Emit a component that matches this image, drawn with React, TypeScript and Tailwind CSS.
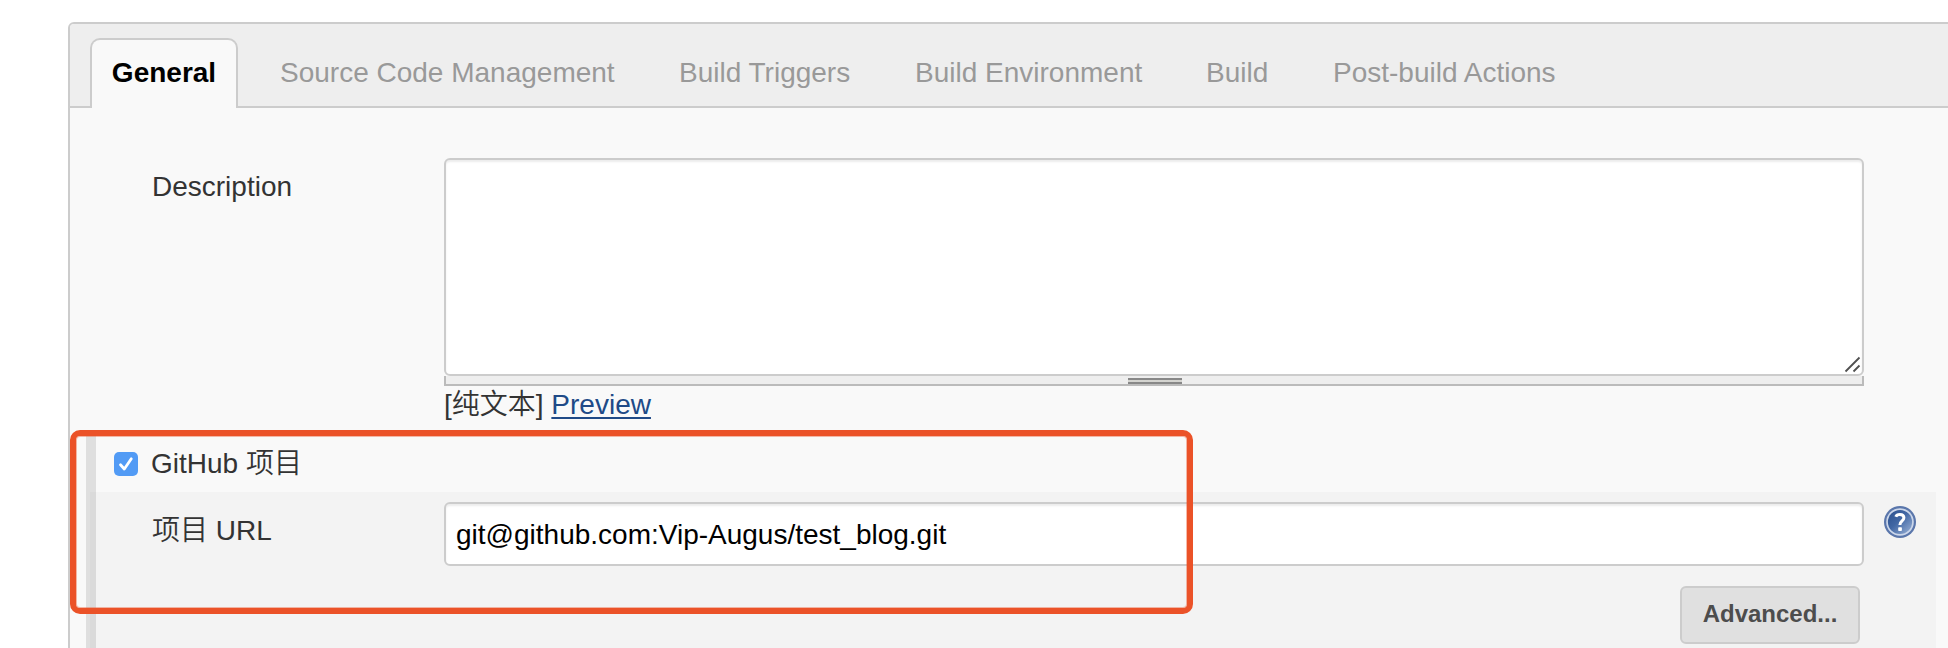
const tabs = [
  { name: "Source Code Management", cls: "w-[335px]" },
  { name: "Build Triggers", cls: "w-[172px]" },
  { name: "Build Environment", cls: "w-[227px]" },
  { name: "Build", cls: "w-[63px]" },
  { name: "Post-build Actions", cls: "w-[225px]" },
];

function HelpIcon() {
  return (
    <svg width="32" height="32" viewBox="0 0 32 32" className="block">
      <defs>
        <linearGradient id="ball" x1="0" y1="0" x2="1" y2="1">
          <stop offset="0" stopColor="#2c4f8c" />
          <stop offset="0.45" stopColor="#4167a4" />
          <stop offset="1" stopColor="#9db4d8" />
        </linearGradient>
      </defs>
      <circle cx="16" cy="16" r="16" fill="#5a76ab" />
      <circle cx="16" cy="16" r="13.8" fill="#ccd7ea" />
      <circle cx="16" cy="16" r="12.1" fill="url(#ball)" />
      <path d="M11.8 10.800c.6-1.500 2-2.300 4-2.300 2.500 0 4.100 1.300 4.100 3.300 0 3.200-4 3.200-4 7.200" fill="none" stroke="#fff" strokeWidth="3" />
      <rect x="14.200" y="21.300" width="3.700" height="3.700" rx="0.800" fill="#fff" />
    </svg>
  );
}

export default function App() {
  return (
    <div className="relative h-[648px] w-[1948px] overflow-hidden bg-white pt-[22px] pl-[68px] font-['Liberation_Sans','Noto_Sans_CJK_SC',sans-serif] text-[28px] leading-[32px] text-[#333]">
      <div className="h-[640px] w-[1900px] rounded-tl-[6px] border-2 border-[#ccc] bg-[#f9f9f9]">
        <div className="flex h-[84px] items-end rounded-tl-[4px] border-b-2 border-[#ccc] bg-[#eee] pl-5">
          <div className="-mb-[2px] flex h-[70px] w-[148px] justify-center rounded-t-[10px] border-2 border-b-0 border-[#ccc] bg-[#f9f9f9] pt-[17px] font-bold text-black">
            General
          </div>
          <div className="ml-[42px] flex h-[66px] gap-16 pt-[17px] text-[#999]">
            {tabs.map((t) => (
              <div key={t.name} className={`shrink-0 whitespace-nowrap ${t.cls}`}>{t.name}</div>
            ))}
          </div>
        </div>

        <div className="flex h-[322px] pt-[50px] pl-[82px]">
          <div className="w-[292px] pt-[13px]">Description</div>
          <div className="w-[1420px]">
            <div className="flex h-[218px] items-end justify-end rounded-[6px] border-2 border-[#ccc] bg-white shadow-[inset_0_2px_2px_rgba(0,0,0,0.075)]">
              <svg width="18" height="18" viewBox="0 0 18 18" className="block" fill="none" stroke="#505050" strokeWidth="1.800">
                <path d="M1.500 15.500L15.500 1.500M9.500 15.500L15.500 9.500" />
              </svg>
            </div>
            <div className="flex h-[10px] justify-center border-2 border-t-0 border-[#bbb] bg-[#eee] pt-[2px] pl-[2px]">
              <div className="h-[6px] w-[54px] border-y-2 border-[#888] bg-[#d4d4d0]" />
            </div>
            <div className="pt-[3px]">
              [<span className="font-[350]">纯文本</span>]{" "}
              <a className="text-[#204a87] underline decoration-2 underline-offset-[3px]">Preview</a>
            </div>
          </div>
        </div>

        <div className="flex pl-4">
          <div className="w-[10px] shrink-0 bg-[#dfdfdf] pt-[62px] pl-1">
            <div className="h-[158px] bg-[#dadada]" />
          </div>
          <div className="w-[1840px]">
            <div className="flex h-[62px] items-center pl-[18px]">
              <div className="mt-[6px] flex h-6 w-6 items-center justify-center rounded-[5px] bg-[#529bf5]">
                <svg width="24" height="24" viewBox="0 0 24 24" fill="none" stroke="#fff" strokeWidth="2.800" strokeLinecap="round" strokeLinejoin="round">
                  <path d="M6.500 12.800L10.300 17L17.300 6.800" />
                </svg>
              </div>
              <div className="ml-[13px] pt-[6px]">
                GitHub <span className="font-[350]">项目</span>
              </div>
            </div>
            <div className="h-[158px] bg-[#f3f3f3] pt-[10px]">
              <div className="flex">
                <div className="w-[348px] pt-[13px] pl-14">
                  <span className="font-[350]">项目</span> URL
                </div>
                <div className="h-16 w-[1420px] rounded-[6px] border-2 border-[#ccc] bg-white pt-[15px] pl-[10px] text-black shadow-[inset_0_2px_2px_rgba(0,0,0,0.075)]">
                  git@github.com:Vip-Augus/test_blog.git
                </div>
                <div className="ml-5 pt-1">
                  <HelpIcon />
                </div>
              </div>
              <div className="mt-5 flex justify-end pr-[76px]">
                <div className="flex h-[58px] w-[180px] justify-center rounded-[6px] border-2 border-[#ccc] bg-[#e0e0e0] pt-[10px] text-2xl leading-[32px] font-bold text-[#4d4d4d]">
                  Advanced...
                </div>
              </div>
            </div>
          </div>
        </div>
      </div>
      <div className="absolute top-[430px] left-[70px] h-[184px] w-[1123px] rounded-[10px] border-[6px] border-[#eb5228] shadow-[inset_0_0_0_1px_rgba(235,82,40,0.4)]" />
    </div>
  );
}
